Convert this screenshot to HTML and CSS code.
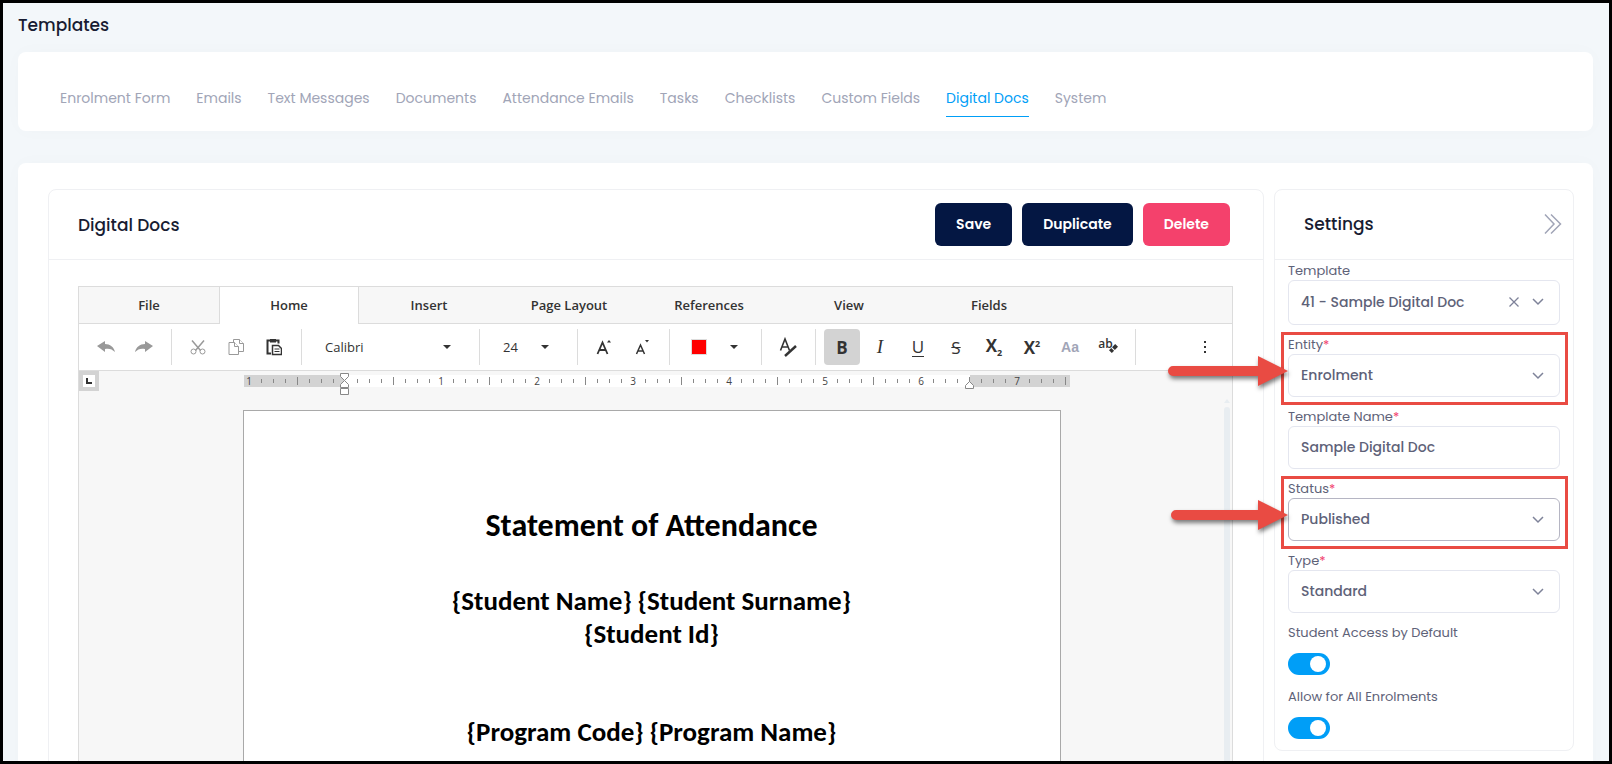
FILE: index.html
```html
<!DOCTYPE html>
<html lang="en">
<head>
    <meta charset="UTF-8">
    <meta name="viewport" content="width=device-width, initial-scale=1.0">
    <title>Templates</title>
    <link rel="stylesheet" href="styles.css">
</head>
<body>
    <div class="frame">
        <h1 class="page-title">Templates</h1>
        <nav class="card nav">
            <a href="#">Enrolment Form</a>
            <a href="#">Emails</a>
            <a href="#">Text Messages</a>
            <a href="#">Documents</a>
            <a href="#">Attendance Emails</a>
            <a href="#">Tasks</a>
            <a href="#">Checklists</a>
            <a href="#">Custom Fields</a>
            <a href="#" class="active">Digital Docs</a>
            <a href="#">System</a>
        </nav>

        <main class="card content">
            <section class="panel docs">
                <div class="panel-header">
                    <h2>Digital Docs</h2>
                    <div class="actions">
                        <button class="btn">Save</button>
                        <button class="btn">Duplicate</button>
                        <button class="btn btn-danger">Delete</button>
                    </div>
                </div>

                <div class="editor">
                    <div class="tabs">
                        <button class="tab">File</button>
                        <button class="tab selected">Home</button>
                        <button class="tab">Insert</button>
                        <button class="tab">Page Layout</button>
                        <button class="tab">References</button>
                        <button class="tab">View</button>
                        <button class="tab">Fields</button>
                    </div>

                    <div class="toolbar">
                        <div class="group">
                            <button class="tool" aria-label="Undo">
                                <svg width="18" height="12" viewBox="0 0 18 12"><path d="M0 5 8 0v3c5 0 9 3 10 8-3-3-6-4-10-3v3z" fill="#999"/></svg>
                            </button>
                            <button class="tool" aria-label="Redo">
                                <svg width="18" height="12" viewBox="0 0 18 12"><path d="M18 5 10 0v3C5 3 1 6 0 11c3-3 6-4 10-3v3z" fill="#999"/></svg>
                            </button>
                        </div>
                        <div class="group">
                            <button class="tool" aria-label="Cut">
                                <svg width="16" height="16" viewBox="0 0 16 16" fill="none" stroke="#999"><path d="M2 1.500 10.500 11.500M14 1.500 5.500 11.500" stroke-width="1.500"/><circle cx="3.500" cy="12.500" r="2.500"/><circle cx="12.500" cy="12.500" r="2.500"/></svg>
                            </button>
                            <button class="tool" aria-label="Copy">
                                <svg width="16" height="18" viewBox="0 0 16 18" fill="#fff" stroke="#999"><path d="M5.500 1.500h6l4 4v8h-10z"/><path d="M11.500 1.500v4h4"/><path d="M1 4.500h5.500l4 4v8H1z"/><path d="M6.500 4.500v4h4"/></svg>
                            </button>
                            <button class="tool" aria-label="Paste">
                                <svg width="16" height="18" viewBox="0 0 16 18" fill="none" stroke="#333"><path d="M4 2.500H1.500v13H5M10 2.500h2.500v3" stroke-width="2"/><path d="M4 1h6v3.500H4z" fill="#333" stroke="none"/><path d="M6.500 7.500h6l3 3v6h-9z" fill="#fff" stroke-width="1.500"/><path d="M8.500 11h5M8.500 13.500h5"/></svg>
                            </button>
                        </div>
                        <div class="group">
                            <div class="picker picker-font">
                                <select aria-label="Font"><option>Calibri</option></select>
                                <span class="caret"></span>
                            </div>
                        </div>
                        <div class="group">
                            <div class="picker picker-size">
                                <select aria-label="Font size"><option>24</option></select>
                                <span class="caret"></span>
                            </div>
                        </div>
                        <div class="group">
                            <button class="tool" aria-label="Grow font">
                                <svg width="16" height="18" viewBox="0 0 16 18"><path d="M1.500 16 6.500 4.500 11.500 16M3.500 12h6" fill="none" stroke="#333" stroke-width="1.800"/><path d="M11 4.500 13 2l2 2.500z" fill="#333"/></svg>
                            </button>
                            <button class="tool" aria-label="Shrink font">
                                <svg width="16" height="18" viewBox="0 0 16 18"><path d="M2.500 16 6.500 7 10.500 16M4 13h5" fill="none" stroke="#333" stroke-width="1.500"/><path d="M11 2h4l-2 2.500z" fill="#333"/></svg>
                            </button>
                        </div>
                        <div class="group">
                            <button class="tool color" aria-label="Font color"><span class="swatch"></span></button>
                            <button class="tool" aria-label="More colors"><span class="caret"></span></button>
                        </div>
                        <div class="group">
                            <button class="tool" aria-label="Font settings">
                                <svg width="18" height="20" viewBox="0 0 18 20" fill="none" stroke="#333"><path d="M1.500 13.500 6 2l4.500 11.500M3 10h6" stroke-width="1.600"/><path d="M6 19 17 9" stroke-width="2.400"/></svg>
                            </button>
                        </div>
                        <div class="group">
                            <button class="tool on" aria-label="Bold"><b>B</b></button>
                            <button class="tool" aria-label="Italic"><i>I</i></button>
                            <button class="tool" aria-label="Underline"><span class="under">U</span></button>
                            <button class="tool" aria-label="Strikethrough"><s>S</s></button>
                            <button class="tool" aria-label="Subscript"><b>X<sub>2</sub></b></button>
                            <button class="tool" aria-label="Superscript"><b>X<sup>2</sup></b></button>
                            <button class="tool" aria-label="Change case"><span class="case">Aa</span></button>
                            <button class="tool" aria-label="Clear formatting">
                                <span class="clear">ab</span>
                                <svg width="9" height="9" viewBox="0 0 8 8" class="eraser"><path d="M0 5.500 2 3.500l2.500 2.500-2 2zM2.700 2.800 5.500 0 8 2.500 5.200 5.300z" fill="#333"/></svg>
                            </button>
                        </div>
                        <button class="tool more" aria-label="More">
                            <svg width="4" height="14" viewBox="0 0 4 14" fill="#333"><path d="M1 1h2v2H1zM1 6h2v2H1zM1 11h2v2H1z"/></svg>
                        </button>
                    </div>

                    <div class="workspace">
                        <span class="tab-stop"><span><svg width="6" height="6" viewBox="0 0 6 6"><path d="M1 0v5h5" fill="none" stroke="#333" stroke-width="2"/></svg></span></span>
                        <div class="sheet">
                            <svg class="ruler" width="826" height="24" viewBox="0 0 826 24">
                                <defs>
                                    <path id="inch" d="M12.500 5v4M24.500 5v4M36.500 5v4M48.500 3v8M60.500 5v4M72.500 5v4M84.500 5v4" stroke="#888"/>
                                </defs>
                                <rect width="826" height="12" y="1" fill="#d3d3d3"/>
                                <rect x="100" y="1" width="626" height="12" fill="#fff"/>
                                <use href="#inch" x="5"/>
                                <use href="#inch" x="101"/>
                                <use href="#inch" x="197"/>
                                <use href="#inch" x="293"/>
                                <use href="#inch" x="389"/>
                                <use href="#inch" x="485"/>
                                <use href="#inch" x="581"/>
                                <use href="#inch" x="677"/>
                                <path d="M785.500 5v4M797.500 5v4M809.500 5v4M821.500 3v8" stroke="#888"/>
                                <g class="ruler-num">
                                    <text x="5" y="11">1</text>
                                    <text x="197" y="11">1</text>
                                    <text x="293" y="11">2</text>
                                    <text x="389" y="11">3</text>
                                    <text x="485" y="11">4</text>
                                    <text x="581" y="11">5</text>
                                    <text x="677" y="11">6</text>
                                    <text x="773" y="11">7</text>
                                </g>
                                <!-- indent markers -->
                                <g fill="#fff" stroke="#888">
                                    <path d="M96.500-.5h8v3l-4 4-4-4zM100.500 6.500l4 4v3h-8v-3zM96.500 14.500h8v6h-8z"/>
                                    <path d="M725.500 7.500l4 4v3h-8v-3z"/>
                                </g>
                            </svg>
                            <div class="paper">
                                <h3>Statement of Attendance</h3>
                                <p>{Student Name} {Student Surname}</p>
                                <p>{Student Id}</p>
                                <p class="program">{Program Code} {Program Name}</p>
                            </div>
                        </div>
                        <div class="scrollbar">
                            <span class="scroll-up"></span>
                            <span class="thumb"></span>
                        </div>
                    </div>
                </div>
            </section>

            <aside class="panel settings">
                <div class="panel-header">
                    <h2>Settings</h2>
                    <button class="collapse" aria-label="Collapse">
                        <svg width="18" height="20" viewBox="0 0 18 20" fill="none" stroke="#a1a5b7" stroke-width="1.500"><path d="M1 .5 10 10 1 19.500M7 .5 16.500 10 7 19.500"/></svg>
                    </button>
                </div>

                <form class="fields">
                    <div class="field">
                        <label for="template">Template</label>
                        <div class="control tall">
                            <select id="template"><option>41 - Sample Digital Doc</option></select>
                            <button type="button" class="reset" aria-label="Clear">
                                <svg width="10" height="10" viewBox="0 0 10 10" fill="none" stroke="#7e8299" stroke-width="1.300"><path d="M.5.5l9 9M9.500.5l-9 9"/></svg>
                            </button>
                            <svg class="chevron" width="12" height="8" viewBox="0 0 12 8"><path d="M1 1l5 5 5-5"/></svg>
                        </div>
                    </div>
                    <div class="field callout">
                        <label for="entity">Entity<em>*</em></label>
                        <div class="control">
                            <select id="entity"><option>Enrolment</option></select>
                            <svg class="chevron" width="12" height="8" viewBox="0 0 12 8"><path d="M1 1l5 5 5-5"/></svg>
                        </div>
                        <svg class="arrow" width="120" height="30" viewBox="0 0 120 30"><path d="M5 10h85V0l30 15-30 15V20H5a5 5 0 0 1 0-10z"/></svg>
                    </div>
                    <div class="field">
                        <label for="name">Template Name<em>*</em></label>
                        <div class="control">
                            <input id="name" type="text" value="Sample Digital Doc">
                        </div>
                    </div>
                    <div class="field callout">
                        <label for="status">Status<em>*</em></label>
                        <div class="control">
                            <select id="status" class="current"><option>Published</option></select>
                            <svg class="chevron" width="12" height="8" viewBox="0 0 12 8"><path d="M1 1l5 5 5-5"/></svg>
                        </div>
                        <svg class="arrow" width="117" height="30" viewBox="3 0 117 30"><path d="M8 10h82V0l30 15-30 15V20H8a5 5 0 0 1 0-10z"/></svg>
                    </div>
                    <div class="field">
                        <label for="type">Type<em>*</em></label>
                        <div class="control">
                            <select id="type"><option>Standard</option></select>
                            <svg class="chevron" width="12" height="8" viewBox="0 0 12 8"><path d="M1 1l5 5 5-5"/></svg>
                        </div>
                    </div>
                    <div class="field switch">
                        <label for="access">Student Access by Default</label>
                        <input id="access" type="checkbox" checked>
                    </div>
                    <div class="field switch">
                        <label for="allow">Allow for All Enrolments</label>
                        <input id="allow" type="checkbox" checked>
                    </div>
                </form>
            </aside>
        </main>
    </div>
</body>
</html>
```
FILE: styles.css
```css
*{
    box-sizing: border-box;
}
body{
    margin: 0;
    font-family: Poppins, Inter, sans-serif;
    font-size: 14px;
    color: #181c32;
}
h1, h2, h3, p{
    margin: 0;
}
button, select, input{
    font: inherit;
    color: inherit;
    margin: 0;
}
button{
    border: 0;
    padding: 0;
    background: none;
    cursor: pointer;
}
svg{
    display: block;
}
.frame{
    height: 100vh;
    overflow: hidden;
    border: 3px solid black;
    padding: 0 16px 0 15px;
    background-color: #f3f7fa;
}
.page-title{
    font-size: 17px;
    font-weight: 500;
    line-height: 44px;
    margin-bottom: 5px;
}
.card{
    background-color: white;
    border-radius: 8px;
    box-shadow: 0 0 20px rgba(76, 87, 125, 0.02);
}

/* section links */
.nav{
    display: flex;
    gap: 26px;
    padding: 28px 42px 14px;
    margin-bottom: 32px;
}
.nav a{
    color: #a1a5b7;
    text-decoration: none;
    line-height: 36px;
    border-bottom: 1px solid transparent;
}
.nav a.active{
    color: #009ef7;
    border-color: #009ef7;
}

.content{
    display: flex;
    align-items: flex-start;
    gap: 10px;
    padding: 26px 19px 30px 30px;
}
.panel{
    border: 1px solid #eff0f3;
    border-radius: 8px;
}
.panel-header{
    display: flex;
    align-items: center;
    justify-content: space-between;
    height: 70px;
    border-bottom: 1px solid #eff0f3;
}
.panel-header h2{
    font-size: 17px;
    font-weight: 500;
}
.docs{
    flex: 1;
    min-width: 0;
}
.docs .panel-header{
    padding: 0 33px 0 29px;
}
.actions{
    display: flex;
    gap: 10px;
}
.btn{
    height: 43px;
    padding: 0 21px;
    border-radius: 6px;
    background-color: #041743;
    color: white;
    font-weight: 600;
}
.btn-danger{
    background-color: #f4416c;
}

/* document editor */
.editor{
    margin: 26px 30px 30px 29px;
    border: 1px solid #dcdcdc;
    background-color: #f7f7f7;
    font-family: "Segoe UI", "Open Sans", sans-serif;
    font-size: 13px;
    color: #333;
}
.tabs{
    display: flex;
}
.tabs::after{
    content: "";
    flex: 1;
    border-bottom: 1px solid #dcdcdc;
}
.tab{
    width: 140px;
    height: 37px;
    border-bottom: 1px solid #dcdcdc;
    font-weight: 600;
}
.tab.selected{
    background-color: white;
    border: solid #dcdcdc;
    border-width: 0 1px;
    padding-bottom: 1px;
}
.toolbar{
    display: flex;
    align-items: center;
    height: 47px;
    padding-left: 1px;
    background-color: white;
    border-bottom: 1px solid #dcdcdc;
}
.group{
    display: flex;
    gap: 2px;
    padding: 0 9px 0 8px;
    border-right: 1px solid #dcdcdc;
}
.tool{
    display: flex;
    align-items: center;
    justify-content: center;
    width: 36px;
    height: 36px;
    border-radius: 4px;
    font-size: 17px;
}
.tool.on{
    background-color: #d3d3d3;
}
.tool.color{
    padding-left: 6px;
}
.tool i{
    font-family: "Liberation Serif", serif;
    font-size: 19px;
}
.tool sub, .tool sup{
    font-size: 9px;
}
.under{
    line-height: 18px;
    border-bottom: 1px solid #333;
}
.case{
    font-family: "Liberation Sans", sans-serif;
    font-size: 14px;
    font-weight: bold;
    color: #a1a5b7;
}
.clear{
    font-size: 12px;
    font-weight: 600;
    padding-bottom: 8px;
}
.eraser{
    margin-left: -4px;
    margin-top: 2px;
}
.more{
    margin-left: auto;
    margin-right: 9px;
}
.caret{
    border: 4px solid transparent;
    border-top-color: #333;
    border-bottom-width: 0;
}
.picker{
    position: relative;
}
.picker-font{
    width: 160px;
}
.picker-size{
    width: 80px;
}
.picker select{
    appearance: none;
    width: 100%;
    height: 36px;
    padding: 0 15px;
    border: 0;
    background: none;
}
.picker .caret{
    position: absolute;
    right: 19px;
    top: 16px;
    pointer-events: none;
}
.swatch{
    width: 16px;
    height: 16px;
    background-color: red;
    border: 1px solid #dcdcdc;
}
.workspace{
    display: flex;
    align-items: flex-start;
}
/* sits in the corner, so the sheet is centred across the whole area */
.tab-stop{
    padding: 4px;
    margin-right: -20px;
    background-color: #d3d3d3;
}
.tab-stop span{
    display: block;
    padding: 3px;
    background-color: white;
}
.sheet{
    flex: 0 1 818px;
    min-width: 0;
    margin: 3px auto 0;
}
.ruler{
    margin-left: 1px;
    overflow: visible;
}
.ruler-num{
    font-size: 10px;
    text-anchor: middle;
    fill: #444;
}
.paper{
    min-height: 600px;
    margin-top: 12px;
    padding-top: 95px;
    border: 1px solid #a9a9a9;
    background-color: white;
    color: black;
    font-family: Calibri, Carlito, Lato, sans-serif;
    font-weight: bold;
    text-align: center;
}
.paper h3{
    font-size: 32px;
    line-height: 40px;
    margin-bottom: 38px;
}
.paper p{
    font-size: 27px;
    line-height: 33px;
}
.paper .program{
    margin-top: 65px;
}
.scrollbar{
    display: flex;
    flex-direction: column;
    align-self: stretch;
    align-items: center;
    gap: 4px;
    width: 6px;
    margin: 28px 2px 0 0;
}
.scroll-up{
    border: 3px solid transparent;
    border-bottom: 4px solid #e8edf1;
    border-top: 0;
}
.thumb{
    flex: 1;
    width: 6px;
    border-radius: 3px;
    background-color: #e8edf1;
}

/* settings panel */
.settings{
    flex: 0 0 300px;
}
.settings .panel-header{
    padding: 0 11px 1px 29px;
}
.fields{
    padding: 1px 13px 11px;
    color: #5e6278;
}
.field{
    position: relative;
    margin-bottom: 10px;
}
.field label{
    display: block;
    font-size: 13px;
    line-height: 19px;
}
.field em{
    color: #f1416c;
    font-style: normal;
}
.control{
    position: relative;
    height: 43px;
}
.control.tall{
    height: 45px;
}
.control select, .control input{
    appearance: none;
    width: 100%;
    height: 100%;
    padding: 0 12px 1px;
    border: 1px solid #e4e6ef;
    border-radius: 6px;
    background-color: white;
    font-weight: 500;
    outline: none;
}
.control .current{
    border-color: #b5b5c3;
}
.chevron{
    position: absolute;
    right: 16px;
    top: 18px;
    fill: none;
    stroke: #7e8299;
    stroke-width: 1.5;
    pointer-events: none;
}
.reset{
    position: absolute;
    right: 41px;
    top: 17px;
}
.callout::before{
    content: "";
    position: absolute;
    inset: -3px -8px -8px -7px;
    border: 3px solid #e94b43;
    pointer-events: none;
}
.arrow{
    position: absolute;
    right: 100%;
    top: 21px;
    overflow: visible;
    fill: #e94b43;
    filter: drop-shadow(1px 3px 2px rgba(0, 0, 0, 0.5));
}
.switch{
    margin-bottom: 12px;
}
.switch input{
    appearance: none;
    display: block;
    width: 42px;
    height: 22px;
    padding: 3px 4px;
    margin-top: 11px;
    border-radius: 11px;
    background-color: #009ef7;
}
.switch input::before{
    content: "";
    display: block;
    width: 16px;
    height: 16px;
    margin-left: auto;
    border-radius: 50%;
    background-color: white;
}
.switch:last-child{
    margin-bottom: 0;
}
```
